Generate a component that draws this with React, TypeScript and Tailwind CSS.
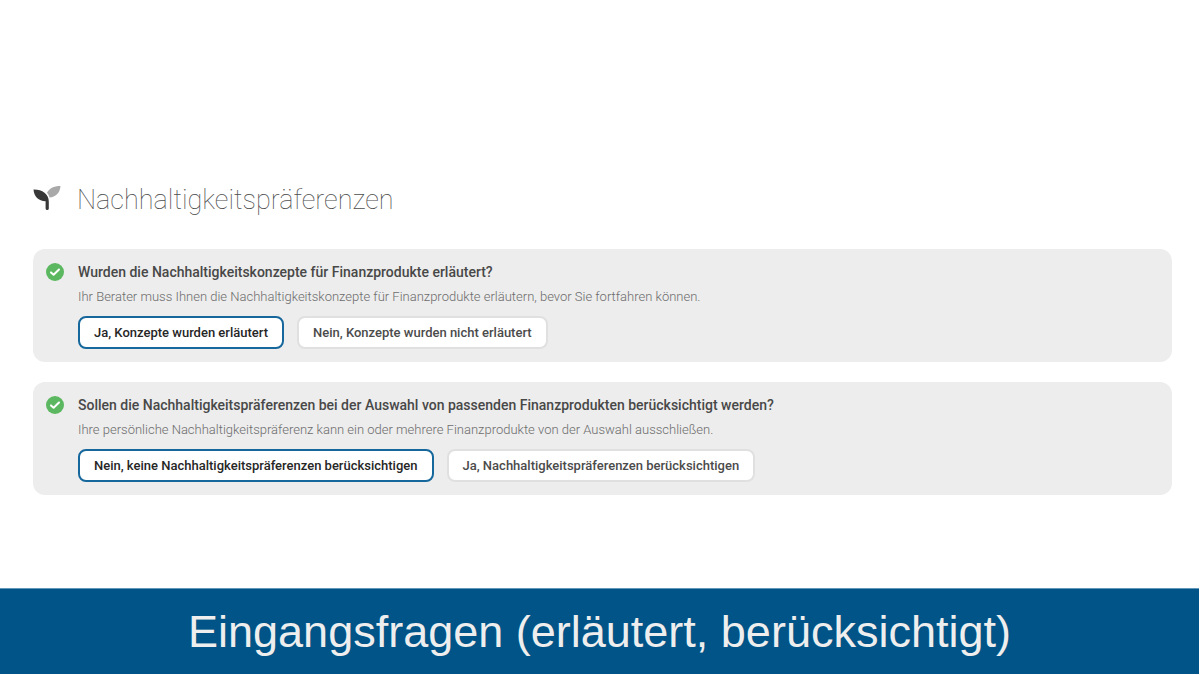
import { useState } from "react";

type Question = {
  id: string;
  title: string;
  hint: string;
  options: string[];
};

const questions: Question[] = [
  {
    id: "konzepte",
    title: "Wurden die Nachhaltigkeitskonzepte für Finanzprodukte erläutert?",
    hint: "Ihr Berater muss Ihnen die Nachhaltigkeitskonzepte für Finanzprodukte erläutern, bevor Sie fortfahren können.",
    options: ["Ja, Konzepte wurden erläutert", "Nein, Konzepte wurden nicht erläutert"],
  },
  {
    id: "praeferenzen",
    title: "Sollen die Nachhaltigkeitspräferenzen bei der Auswahl von passenden Finanzprodukten berücksichtigt werden?",
    hint: "Ihre persönliche Nachhaltigkeitspräferenz kann ein oder mehrere Finanzprodukte von der Auswahl ausschließen.",
    options: ["Nein, keine Nachhaltigkeitspräferenzen berücksichtigen", "Ja, Nachhaltigkeitspräferenzen berücksichtigen"],
  },
];

function SeedlingIcon() {
  return (
    <svg viewBox="0 0 28 24" className="mt-[7px] h-6 w-7 shrink-0" aria-hidden="true">
      <path d="M27.500 0C27 7 22.500 11.300 16.500 11.500C16 9.500 15 8 14 6.800C16.200 2.500 20.500 0 27.500 0Z" fill="#a9a9a9" />
      <path d="M0.500 3.500C9 3.300 15.800 7.800 15.800 15.500V22.500Q15.800 24 14.200 24Q12.600 24 12.600 22.500V15.200C5.500 15 1 10.500 0.500 3.500Z" fill="#383838" />
    </svg>
  );
}

function CheckIcon() {
  return (
    <svg viewBox="0 0 18 18" className="mt-3.5 size-[18px] shrink-0" aria-hidden="true">
      <circle cx="9" cy="9" r="9" fill="#5cb860" />
      <path d="M5 9.400L7.600 11.800L13 6.500" fill="none" stroke="#fff" strokeWidth="2" strokeLinecap="round" strokeLinejoin="round" />
    </svg>
  );
}

function QuestionCard({ question }: { question: Question }) {
  const [selected, setSelected] = useState(0);
  return (
    <section aria-labelledby={question.id} className="flex gap-3.5 rounded-xl bg-[#ededed] pr-3 pb-[13px] pl-[13px]">
      <CheckIcon />
      <div className="min-w-0">
        <h2 id={question.id} className="pt-3 text-sm leading-[22px] font-medium text-[#484848]">
          {question.title}
        </h2>
        <p className="pt-[5px] text-[13px] leading-[18px] font-light text-[#6c6c6c]">{question.hint}</p>
        <div className="flex flex-wrap gap-[13px] pt-2.5">
          {question.options.map((option, index) => (
            <button
              key={option}
              type="button"
              aria-pressed={selected === index}
              onClick={() => setSelected(index)}
              className={
                selected === index
                  ? "min-h-[33px] rounded-lg border-2 border-[#16679b] bg-white px-3.5 text-[13px] font-medium text-[#262626]"
                  : "min-h-[33px] rounded-lg border-2 border-[#e0e0e0] bg-white px-3.5 text-[13px] font-medium text-[#4b4b4b]"
              }
            >
              {option}
            </button>
          ))}
        </div>
      </div>
    </section>
  );
}

export default function App() {
  return (
    <div className="flex min-h-screen flex-col bg-white pb-px font-['Roboto',sans-serif]">
      <main className="grow pt-[179px] pr-7 pb-10 pl-[33px]">
        <header className="flex items-start gap-4">
          <SeedlingIcon />
          <h1 className="text-[27px] leading-[42px] font-thin text-[#4c4c4c]">Nachhaltigkeitspräferenzen</h1>
        </header>
        <div className="flex flex-col gap-5 pt-7">
          {questions.map((question) => (
            <QuestionCard key={question.id} question={question} />
          ))}
        </div>
      </main>
      <footer className="mr-px border-t border-[#6096b7] bg-[#005487] px-6 py-4 text-center font-['Liberation_Sans',Arial,sans-serif] text-[45px] leading-[53px] text-[#eeeeee]">
        Eingangsfragen (erläutert, berücksichtigt)
      </footer>
    </div>
  );
}
